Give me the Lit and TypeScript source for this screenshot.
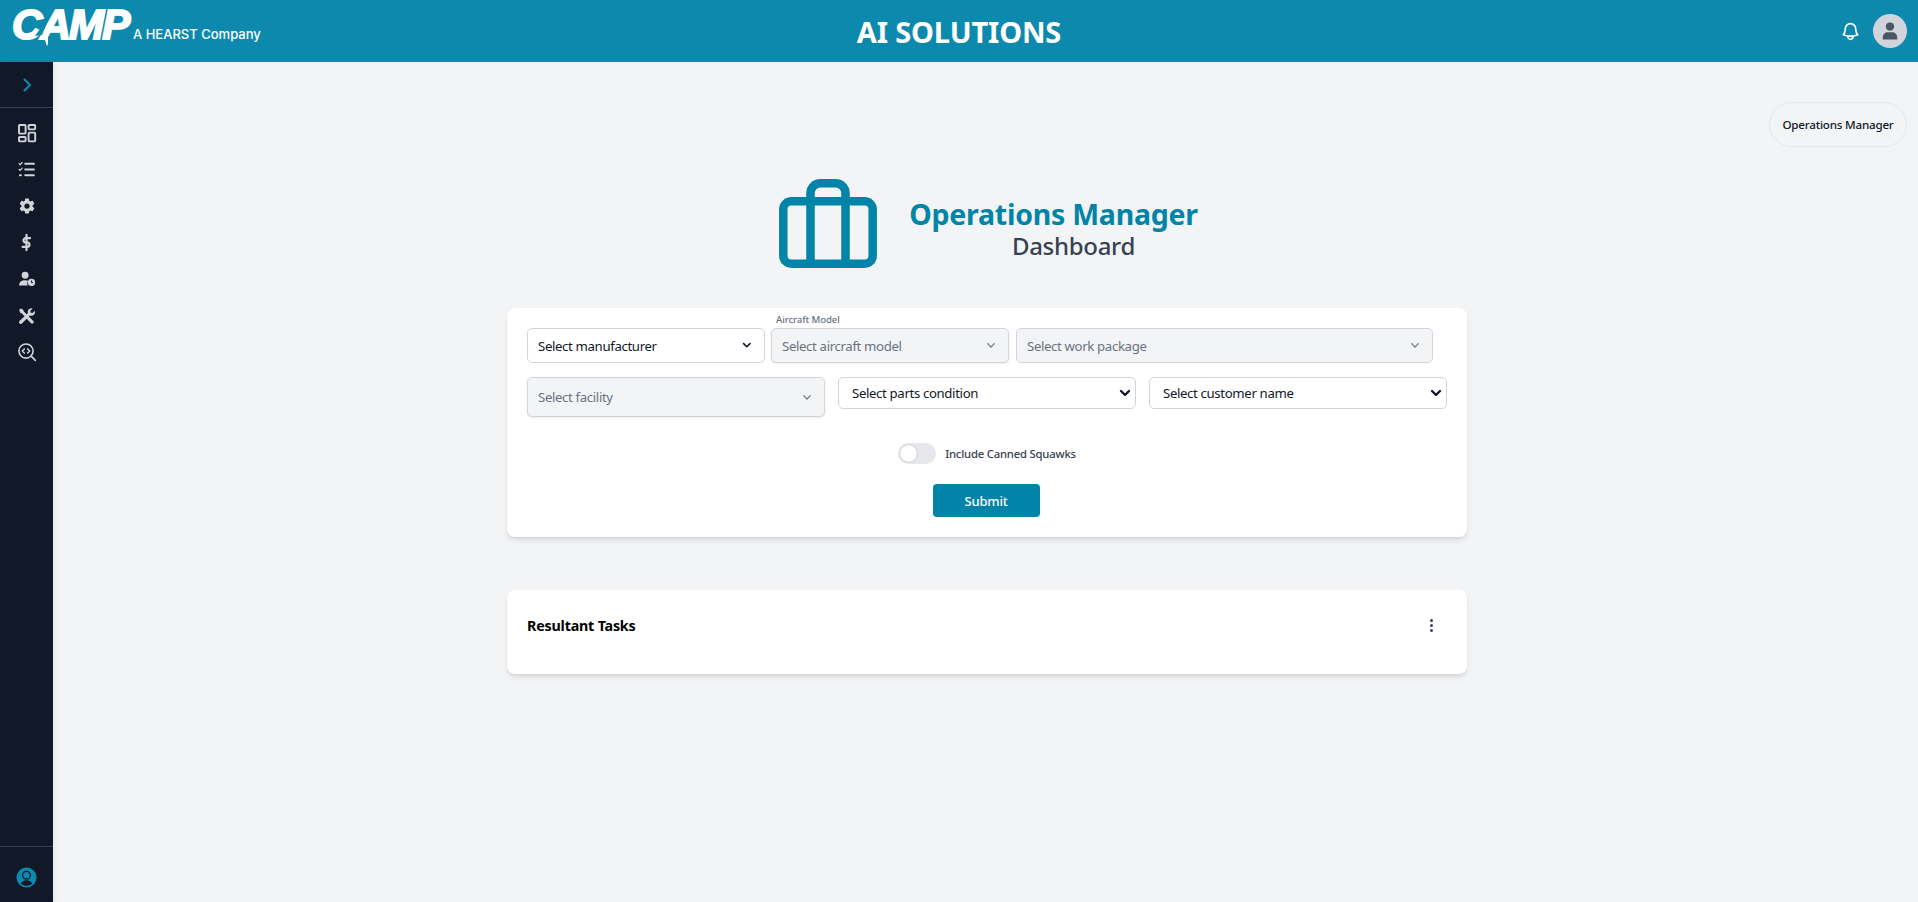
import { LitElement, html, css, svg } from "lit";
import { customElement } from "lit/decorators.js";

const chev = (cls: string) => html`<svg class="chev ${cls}" viewBox="0 0 12 8" fill="none" stroke="currentColor" stroke-linecap="round" stroke-linejoin="round"><path d="M2 2l4 4 4-4"/></svg>`;

const navIcons = [
  { size: 24, icon: svg`<g fill="none" stroke="#d1d5db" stroke-width="1.9" stroke-linejoin="round"><rect x="4" y="4" width="6.6" height="8.6" rx=".8"/><rect x="4" y="16" width="6.6" height="4.4" rx=".8"/><rect x="13.6" y="11.6" width="6.6" height="8.8" rx=".8"/><rect x="13.6" y="4" width="6.6" height="4.4" rx=".8"/></g>` },
  { size: 21, icon: svg`<g fill="none" stroke="#d1d5db" stroke-linecap="round" stroke-linejoin="round"><path stroke-width="2.2" d="M10.5 5.5h10M10.5 12h10M10.5 18.5h10"/><path stroke-width="1.4" d="M3.5 5.3l1.3 1.3 2.2-2.6M3.5 11.8l1.3 1.3 2.2-2.6"/><path stroke-width="2.4" d="M4.5 18.5h1"/></g>` },
  { size: 18, icon: svg`<path fill="#d1d5db" d="M12 15.5A3.5 3.5 0 0 1 8.5 12 3.5 3.5 0 0 1 12 8.5a3.5 3.5 0 0 1 3.5 3.5 3.5 3.5 0 0 1-3.5 3.5m7.43-2.53c.04-.32.07-.64.07-.97 0-.33-.03-.66-.07-1l2.11-1.63c.19-.15.24-.42.12-.64l-2-3.46c-.12-.22-.39-.31-.61-.22l-2.49 1c-.52-.39-1.06-.73-1.69-.98l-.37-2.65A.506.506 0 0 0 14 2h-4c-.25 0-.46.18-.5.42l-.37 2.65c-.63.25-1.17.59-1.69.98l-2.49-1c-.22-.09-.49 0-.61.22l-2 3.46c-.13.22-.07.49.12.64L4.57 11c-.04.34-.07.67-.07 1 0 .33.03.65.07.97l-2.11 1.66c-.19.15-.25.42-.12.64l2 3.46c.12.22.39.3.61.22l2.49-1.01c.52.4 1.06.74 1.69.99l.37 2.65c.04.24.25.42.5.42h4c.25 0 .46-.18.5-.42l.37-2.65c.63-.26 1.17-.59 1.69-.99l2.49 1.01c.22.08.49 0 .61-.22l2-3.46c.12-.22.07-.49-.12-.64l-2.11-1.66Z"/>` },
  { size: 19, icon: svg`<g fill="none" stroke="#d1d5db" stroke-width="2.8" stroke-linecap="round" stroke-linejoin="round"><path d="M12 2.5v19"/><path d="M16.5 6.5H10a3 3 0 0 0 0 5.500h4a3 3 0 0 1 0 5.500H7"/></g>` },
  { size: 18, icon: svg`<g fill="#d1d5db"><circle cx="9.5" cy="7" r="4.6"/><path d="M1.5 20.5c0-4.500 3-7 8-7 1.600 0 3 .3 4 .8a6 6 0 0 0-.6 6.200Z"/><circle cx="18" cy="16.5" r="4.8"/></g><path fill="none" stroke="#111827" stroke-width="1.3" d="M18 14V16.700h2"/>` },
  { size: 18, icon: svg`<g fill="#d1d5db"><path d="M14 6.500a5 5 0 0 1 6.500-4l-3 3 .4 2.600 2.600.4 3-3a5 5 0 0 1-6.600 6.300L6.200 22.500a2.200 2.200 0 0 1-3.200-3.200L14.300 8.500a5 5 0 0 1-.3-2Z" transform="translate(-1 -.5)"/><path d="M3.500 2L7 3.600l.6 2 12.700 12.900c.9.900.9 2.200.1 3s-2.100.8-3 0L4.800 8.400l-1.900-.7L1.500 4Z"/></g>` },
  { size: 20, icon: svg`<g fill="none" stroke="#d1d5db" stroke-width="1.9" stroke-linecap="round" stroke-linejoin="round"><circle cx="10.8" cy="10.8" r="8.5"/><path d="M17 17l5 5"/><path stroke-width="1.8" d="M8.800 8.300l-2.400 2.500 2.400 2.500M12.800 8.300l2.400 2.500-2.400 2.500"/></g>` },
];

@customElement("app-root")
export class AppRoot extends LitElement {
  static styles = css`
    :host { display: flex; flex-direction: column; min-height: 100vh; height: 902px; overflow: hidden; background: #f3f4f6; font-family: "Noto Sans", "Open Sans", sans-serif; color: #111827; }
    * { box-sizing: border-box; }
    .top { height: 62px; flex: none; background: #0e89ae; display: grid; grid-template-columns: 1fr auto 1fr; align-items: center; color: #fff; }
    .brand { display: flex; align-items: center; padding-left: 12px; position: relative; height: 62px; }
    .camp { font-family: "Liberation Sans", sans-serif; font-weight: 700; font-style: italic; font-size: 42px; line-height: 42px; letter-spacing: -1.8px; -webkit-text-stroke: 2px #fff; margin-top: -12px; width: 121px; }
    .tail { position: absolute; left: 34px; top: 8px; width: 24px; height: 40px; }
    .hearst { font-family: "Inter", sans-serif; font-size: 13px; font-weight: 500; white-space: nowrap; margin-top: 6px; }
    .title { font-size: 29px; font-weight: 700; letter-spacing: -.15px; font-family: "Noto Sans", sans-serif; }
    .actions { display: flex; justify-content: flex-end; align-items: center; gap: 12px; padding-right: 11px; }
    .bell { width: 21px; height: 21px; display: block; }
    .avatar { width: 34px; height: 34px; border-radius: 50%; background: #d1d5db; display: flex; align-items: center; justify-content: center; }
    .avatar svg { width: 20px; height: 20px; }
    .body { flex: 1; display: flex; min-height: 0; }
    aside { width: 53px; flex: none; background: #111827; display: flex; flex-direction: column; box-shadow: 2px 0 6px rgba(0,0,0,.05); }
    .toggle { height: 46px; flex: none; display: flex; align-items: center; justify-content: center; border-bottom: 1px solid #374151; color: #0e89ae; }
    .toggle svg { width: 16px; height: 16px; }
    .nav { flex: 1; display: flex; flex-direction: column; align-items: center; padding-top: 7px; }
    .nav a { height: 36.5px; display: flex; align-items: center; justify-content: center; }
    .nav svg { display: block; }
    .foot { height: 56px; flex: none; border-top: 1px solid #374151; display: flex; align-items: center; justify-content: center; padding-top: 5px; }
    .foot svg { width: 21px; height: 21px; }
    main { flex: 1; min-width: 0; display: flex; flex-direction: column; align-items: center; padding: 40px 11px 0 14px; }
    .chiprow { align-self: stretch; display: flex; justify-content: flex-end; }
    .chip { height: 45px; width: 138px; display: flex; align-items: center; justify-content: center; border: 1px solid #e5e7eb; border-radius: 23px; font-size: 11.6px; font-weight: 500; letter-spacing: -.2px; white-space: nowrap; }
    .wrap { width: 960px; display: flex; flex-direction: column; }
    .hero { display: flex; justify-content: center; align-items: center; gap: 32px; margin-top: 32px; height: 89px; padding-left: 3px; }
    .bag { width: 98px; height: 89px; display: block; flex: none; }
    .herotext { display: flex; flex-direction: column; align-items: center; padding-top: 10px; }
    h1 { margin: 0; font-size: 28.5px; line-height: 34px; font-weight: 700; color: #0284a8; letter-spacing: -.25px; white-space: nowrap; }
    h2 { margin: 0; padding-left: 40px; font-size: 24px; line-height: 30px; font-weight: 500; color: #374151; letter-spacing: -.3px; }
    .card { background: #fff; border-radius: 8px; box-shadow: 0 4px 6px -1px rgba(0,0,0,.1), 0 2px 4px -2px rgba(0,0,0,.1); }
    .form { margin-top: 40px; height: 229px; padding: 20px; display: flex; flex-direction: column; }
    .row { display: flex; align-items: flex-start; }
    .r1 { gap: 6px; }
    .r2 { gap: 13px; margin-top: 14px; }
    .sel { position: relative; display: flex; align-items: center; justify-content: space-between; background: #fff; border: 1px solid #d1d5db; border-radius: 5px; font-size: 13.2px; letter-spacing: -.35px; color: #111827; white-space: nowrap; flex: none; }
    .sel.off { background: #f3f4f6; color: #6b7280; }
    .h34 { height: 35px; padding: 0 12px 0 10px; }
    .h40 { height: 40px; padding: 0 12px 0 10px; }
    .h32 { height: 32px; padding: 0 4px 0 13px; }
    .w238 { width: 238px; } .w417 { width: 417px; margin-left: 1px; } .w298 { width: 298px; }
    .shadow { box-shadow: 0 1px 2px rgba(0,0,0,.08); }
    .chev { width: 9.6px; height: 6.4px; stroke-width: 2; }
    .chev.thick { stroke-width: 2.4; width: 12px; height: 8px; }
    .chev.dim { color: #6b7280; stroke-width: 1.4; width: 10px; height: 6.7px; }
    .flabel { position: absolute; left: 4px; top: -16px; font-size: 9.6px; font-weight: 500; color: #6b7280; letter-spacing: -.1px; }
    .switchrow { display: flex; justify-content: center; align-items: center; gap: 9px; margin-top: 26px; height: 21px; }
    .switch { width: 38px; height: 21px; border-radius: 11px; background: #e5e7eb; padding: 2px; }
    .switch i { display: block; width: 17px; height: 17px; border-radius: 50%; background: #fff; box-shadow: 0 0 1px rgba(0,0,0,.4); }
    .switchrow span { font-size: 11.3px; font-weight: 500; color: #374151; letter-spacing: -.2px; }
    .actionsrow { display: flex; justify-content: center; margin-top: 20px; padding-right: 2px; }
    button { width: 107px; height: 33px; border: 0; border-radius: 4px; background: #0284a8; color: #fff; font: 500 13px "Noto Sans", sans-serif; letter-spacing: -.2px; }
    .results { margin-top: 53px; height: 84px; display: flex; align-items: center; justify-content: space-between; padding: 0 34px 14px 20px; }
    .results h3 { margin: 0; font-size: 14.3px; font-weight: 700; color: #000; letter-spacing: -.2px; }
    .dots { width: 3px; display: flex; flex-direction: column; gap: 2px; }
    .dots i { display: block; width: 3px; height: 3px; border-radius: 50%; background: #374151; }
  `;

  render() {
    return html`
      <header class="top">
        <div class="brand">
          <span class="camp">CAMP</span>
          <svg class="tail" viewBox="0 0 24 40"><path fill="#0e89ae" d="M17 5L1 28l7-1z"/><path fill="#fff" d="M9 26.5l5-3.5 0 13-1 2z"/></svg>
          <span class="hearst">A HEARST Company</span>
        </div>
        <div class="title">AI SOLUTIONS</div>
        <div class="actions">
          <svg class="bell" viewBox="0 0 24 24" fill="none" stroke="#fff" stroke-width="1.8" stroke-linecap="round" stroke-linejoin="round"><path d="M14.857 17.082a23.848 23.848 0 0 0 5.454-1.31A8.967 8.967 0 0 1 18 9.75V9A6 6 0 0 0 6 9v.75a8.967 8.967 0 0 1-2.312 6.022c1.733.64 3.56 1.085 5.455 1.31m5.714 0a24.255 24.255 0 0 1-5.714 0m5.714 0a3 3 0 1 1-5.714 0"/></svg>
          <div class="avatar"><svg viewBox="0 0 20 20" fill="#4b5563"><circle cx="10" cy="5.6" r="4.1"/><path d="M2.8 18.6v-2.4c0-3 2.4-5 5-5h4.400c2.600 0 5 2 5 5v2.400z"/></svg></div>
        </div>
      </header>
      <div class="body">
        <aside>
          <div class="toggle"><svg viewBox="0 0 16 16" fill="none" stroke="currentColor" stroke-width="2" stroke-linecap="round" stroke-linejoin="round"><path d="M5.5 2.5L11 8l-5.5 5.5"/></svg></div>
          <nav class="nav">${navIcons.map((i) => html`<a><svg width=${i.size} height=${i.size} viewBox="0 0 24 24">${i.icon}</svg></a>`)}</nav>
          <div class="foot"><svg viewBox="0 0 24 24"><circle cx="12" cy="12" r="11.5" fill="#0e89ae"/><circle cx="12" cy="9.4" r="4.4" fill="#0e89ae" stroke="#111827" stroke-width="1.4"/><path d="M5.5 19.2c1-2.8 3.4-4.2 6.5-4.2s5.500 1.400 6.500 4.200a10 10 0 0 1-13 0z" fill="#111827"/></svg></div>
        </aside>
        <main>
          <div class="chiprow"><div class="chip">Operations Manager</div></div>
          <div class="wrap">
            <section class="hero">
              <svg class="bag" viewBox="0 0 98 89" fill="none" stroke="#0284a8" stroke-width="8.5" stroke-linejoin="round"><rect x="4.3" y="22.3" width="89.4" height="62.4" rx="8"/><path d="M31.5 84.7V14a9.700 9.700 0 0 1 9.700-9.700h15.600A9.700 9.700 0 0 1 66.500 14v70.700"/></svg>
              <div class="herotext"><h1>Operations Manager</h1><h2>Dashboard</h2></div>
            </section>
            <section class="card form">
              <div class="row r1">
                <div class="sel h34 w238">Select manufacturer ${chev("")}</div>
                <div class="sel h34 w238 off shadow"><span class="flabel">Aircraft Model</span>Select aircraft model ${chev("dim")}</div>
                <div class="sel h34 w417 off">Select work package ${chev("dim")}</div>
              </div>
              <div class="row r2">
                <div class="sel h40 w298 off shadow">Select facility ${chev("dim")}</div>
                <div class="sel h32 w298">Select parts condition ${chev("thick")}</div>
                <div class="sel h32 w298">Select customer name ${chev("thick")}</div>
              </div>
              <div class="switchrow"><div class="switch"><i></i></div><span>Include Canned Squawks</span></div>
              <div class="actionsrow"><button>Submit</button></div>
            </section>
            <section class="card results">
              <h3>Resultant Tasks</h3>
              <div class="dots"><i></i><i></i><i></i></div>
            </section>
          </div>
        </main>
      </div>
    `;
  }
}
